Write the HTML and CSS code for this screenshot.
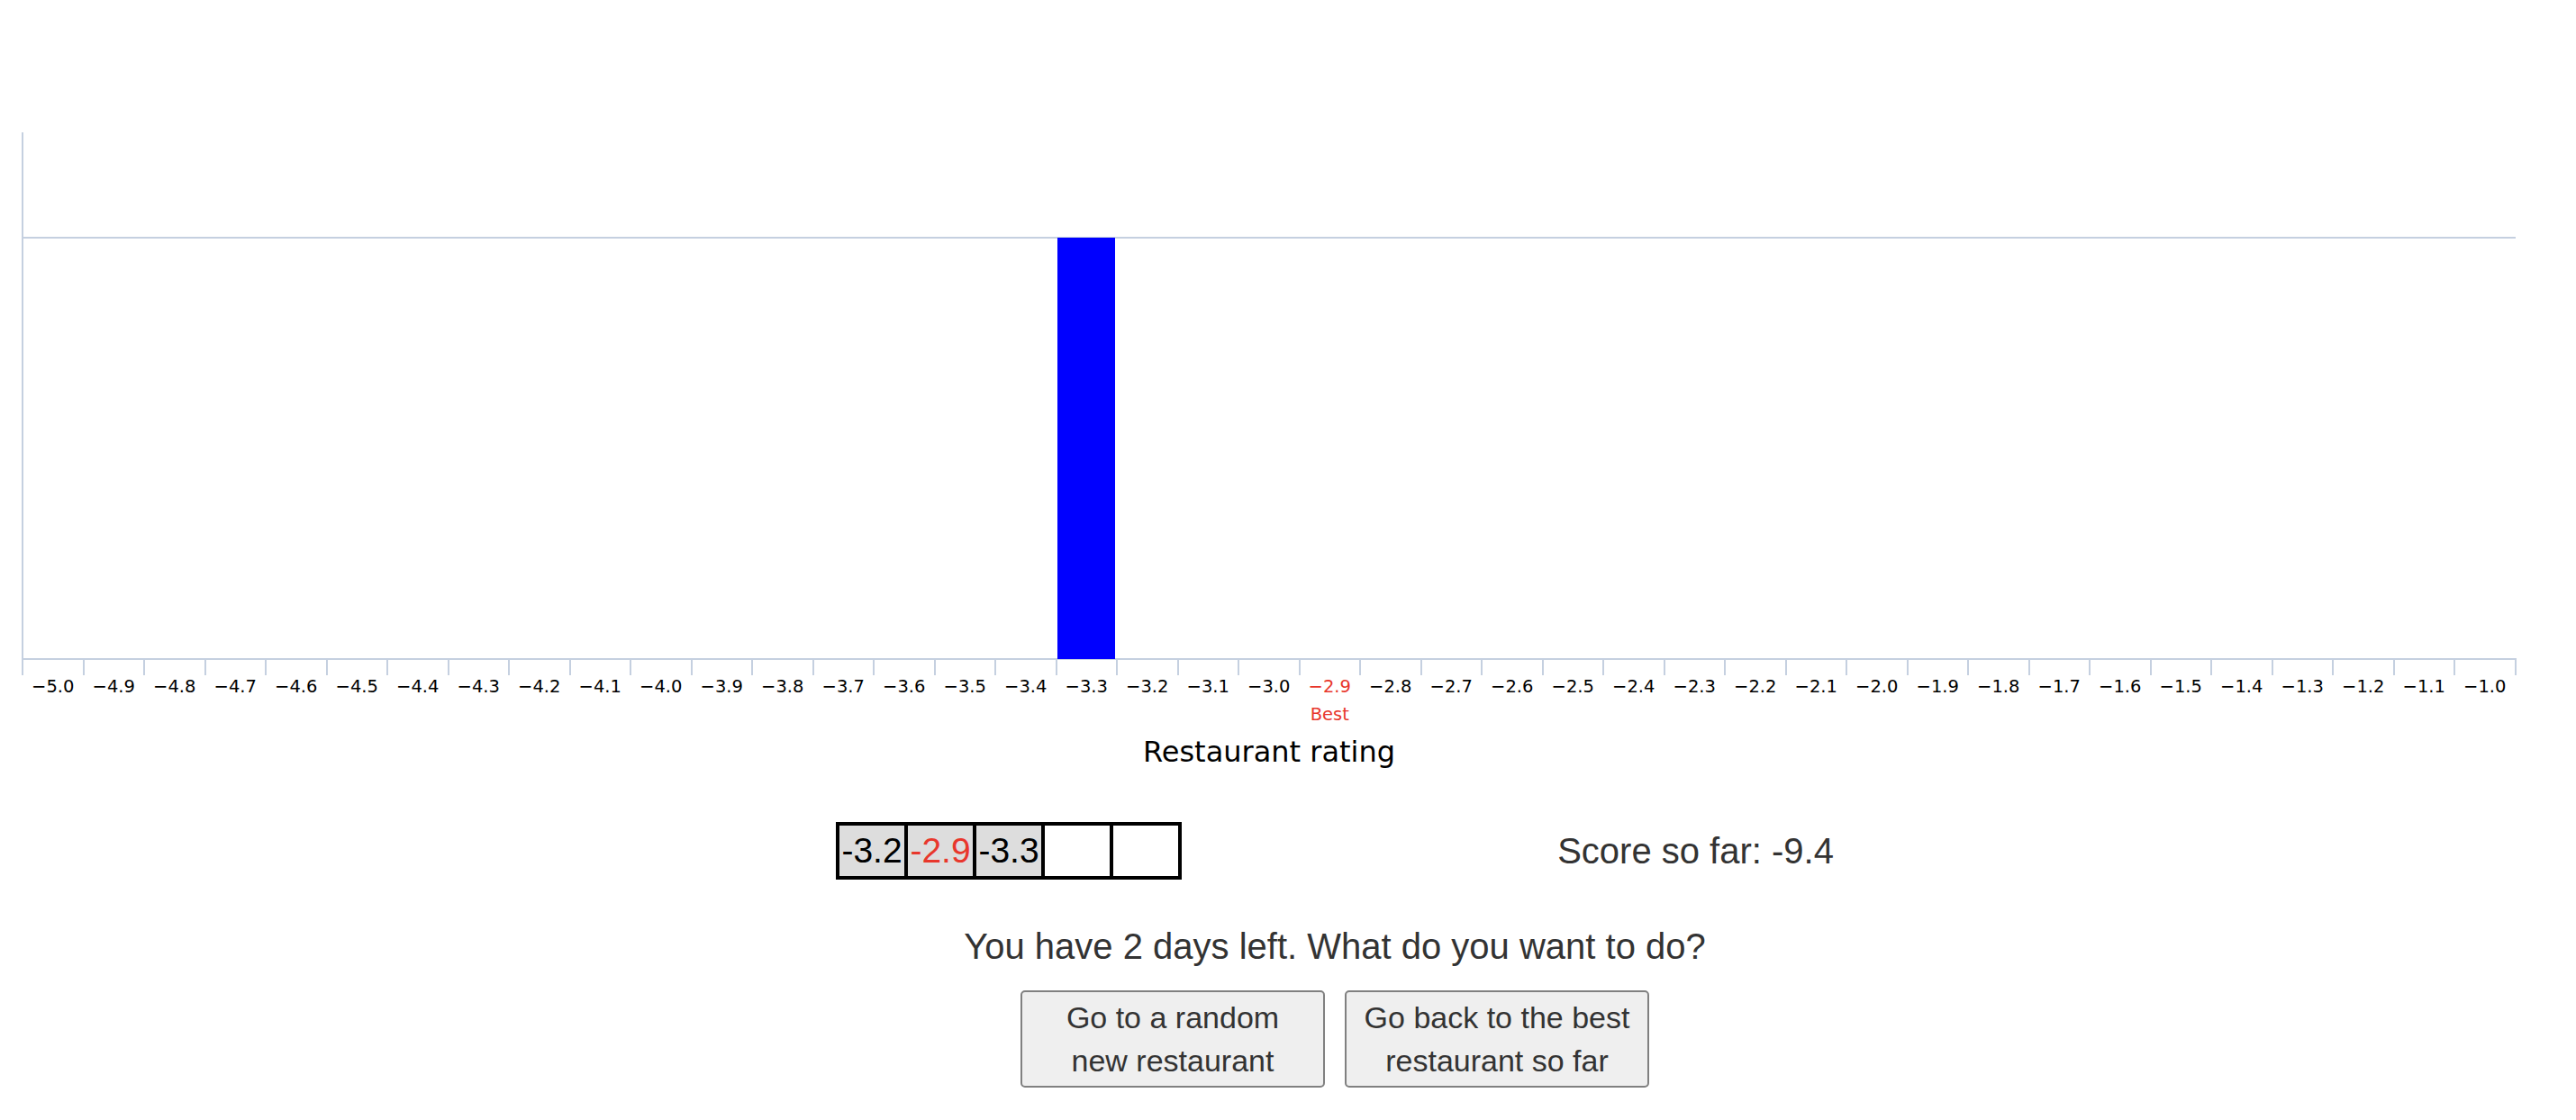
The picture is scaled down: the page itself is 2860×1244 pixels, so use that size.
FILE: index.html
```html
<!DOCTYPE html>
<html>
<head>
<meta charset="utf-8">
<link rel="stylesheet" href="styles.css">
</head>
<body>
<div class="chart">
<svg class="chart-svg" width="2860" height="870" viewBox="0 0 2860 870" xmlns="http://www.w3.org/2000/svg">
  <g class="grid">
    <line x1="25" y1="264" x2="2793" y2="264"/>
    <line x1="25" y1="147" x2="25" y2="750"/>
    <line x1="24" y1="732" x2="2794" y2="732"/>
  </g>
  <g class="ticks" id="ticks"></g>
  <rect class="bar" x="1174" y="264" width="64" height="468"/>
  <g class="labels" id="labels"></g>
  <text class="best" x="1476.25" y="800">Best</text>
  <text class="axis-title" x="1409" y="846">Restaurant rating</text>
</svg>
</div>
<div class="lower">
  <div class="status-row">
    <div class="history">
      <div class="cell filled">-3.2</div>
      <div class="cell filled best-cell">-2.9</div>
      <div class="cell filled">-3.3</div>
      <div class="cell"></div>
      <div class="cell"></div>
    </div>
    <div class="score">Score so far: -9.4</div>
  </div>
  <p class="prompt">You have 2 days left. What do you want to do?</p>
  <div class="actions">
    <button class="action">Go to a random new restaurant</button>
    <button class="action">Go back to the best restaurant so far</button>
  </div>
</div>
<script src="chart.js"></script>
</body>
</html>
```
FILE: styles.css
```css
html, body {
  margin: 0;
  padding: 0;
  background: #ffffff;
}
body {
  font-family: "Liberation Sans", Arial, sans-serif;
  color: #333333;
}
.chart {
  display: block;
  height: 870px;
}
.chart-svg {
  display: block;
}
.grid line, .ticks line {
  stroke: #c5d0e0;
  stroke-width: 2;
  shape-rendering: crispEdges;
}
.bar {
  fill: #0000ff;
}
.labels text {
  font-family: "DejaVu Sans", sans-serif;
  font-size: 19.5px;
  fill: #000000;
  text-anchor: middle;
}
.labels text.red {
  fill: #e8372c;
}
.best {
  font-family: "DejaVu Sans", sans-serif;
  font-size: 19.5px;
  fill: #e8372c;
  text-anchor: middle;
}
.axis-title {
  font-family: "DejaVu Sans", sans-serif;
  font-size: 32px;
  fill: #000000;
  text-anchor: middle;
}
.lower {
  padding-left: 104px;
  display: flex;
  flex-direction: column;
  align-items: center;
}
.status-row {
  width: 1525px;
  margin-top: 43px;
  display: flex;
  justify-content: space-around;
  align-items: center;
}
.history {
  display: flex;
  gap: 4px;
  padding: 4px;
  background: #000000;
}
.cell {
  width: 72px;
  height: 56px;
  line-height: 56px;
  background: #ffffff;
  color: #000000;
  font-size: 39px;
  text-align: center;
  white-space: nowrap;
  overflow: visible;
}
.cell.filled {
  background: #dddddd;
}
.cell.best-cell {
  color: #e8372c;
}
.score {
  font-size: 40px;
  line-height: 46px;
  color: #333333;
}
.prompt {
  margin: 51px 0 0 0;
  font-size: 40px;
  line-height: 46px;
  color: #333333;
}
.actions {
  margin-top: 26px;
  display: flex;
  gap: 22px;
}
.action {
  box-sizing: border-box;
  width: 338px;
  padding: 4px 18px;
  font-family: "Liberation Sans", Arial, sans-serif;
  font-size: 34px;
  line-height: 48px;
  color: #333333;
  background: #efefef;
  border: 2px solid #808080;
  border-radius: 5px;
}
```
FILE: chart.js
```js
(function () {
  var ns = "http://www.w3.org/2000/svg";
  var ticks = document.getElementById("ticks");
  var labels = document.getElementById("labels");
  var x0 = 25, step = 67.5;
  for (var i = 0; i <= 41; i++) {
    var l = document.createElementNS(ns, "line");
    var x = Math.round(x0 + i * step);
    l.setAttribute("x1", x);
    l.setAttribute("x2", x);
    l.setAttribute("y1", 732);
    l.setAttribute("y2", 750);
    ticks.appendChild(l);
  }
  for (var j = 0; j < 41; j++) {
    var v = (-5.0 + j * 0.1).toFixed(1);
    var t = document.createElementNS(ns, "text");
    t.setAttribute("x", x0 + (j + 0.5) * step);
    t.setAttribute("y", 769);
    t.textContent = "\u2212" + v.replace("-", "");
    if (v === "-2.9") t.setAttribute("class", "red");
    labels.appendChild(t);
  }
})();
```
